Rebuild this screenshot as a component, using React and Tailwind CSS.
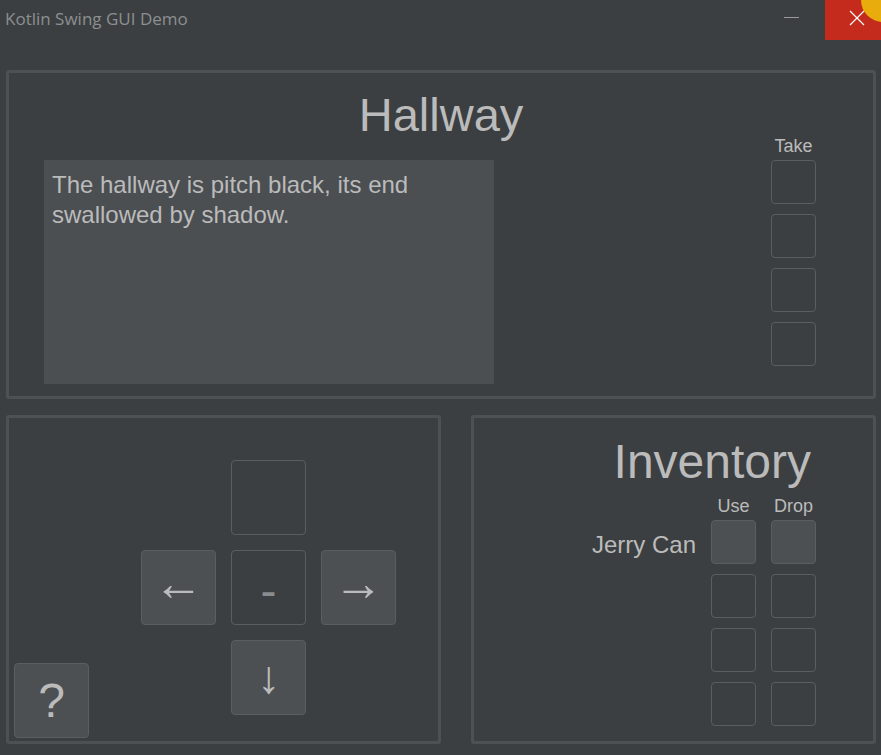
import React from "react";

const Box = ({ enabled = false }) => (
  <div
    className={
      "w-[45px] h-[44px] rounded-[4px] border border-[#5b5e60] " +
      (enabled ? "bg-[#4c5052]" : "")
    }
  />
);

const PadBtn = ({ children, enabled = false, dim = false, extra = "" }) => (
  <div
    className={
      "w-[75px] h-[75px] rounded-[4px] border border-[#5b5e60] flex items-center justify-center " +
      (enabled ? "bg-[#4c5052] " : "") +
      (dim ? "text-[#8a8c8e] " : "text-[#bbbbbb] ") +
      extra
    }
  >
    {children}
  </div>
);

export default function App() {
  return (
    <div className="w-[881px] h-[755px] bg-[#3c3f41] overflow-hidden flex flex-col font-['Liberation_Sans',Arial,sans-serif] text-[#bbbbbb]">
      {/* Title bar */}
      <div className="h-10 flex items-start shrink-0">
        <span className="pl-[5px] pt-[7px] text-[17px] leading-[24px] text-[#8c8f91] font-['Open_Sans',sans-serif]">
          Kotlin Swing GUI Demo
        </span>
        <div className="ml-auto mt-[17px] mr-[26px] w-[15px] h-px bg-[#9a9a9a]" />
        <div className="relative w-[56px] h-10 bg-[#c42b1c] overflow-hidden">
          <svg
            className="absolute left-[24px] top-[10px]"
            width="16"
            height="16"
            viewBox="0 0 16 16"
          >
            <path d="M1 1 L15 15 M15 1 L1 15" stroke="#ffffff" strokeWidth="1.2" fill="none" />
          </svg>
          <div className="absolute left-[36px] top-[-22px] w-[44px] h-[44px] rounded-full bg-[#e8ad0c]" />
        </div>
      </div>

      {/* Content */}
      <div className="flex flex-col pl-[6px] pt-[30px]">
        {/* Top panel */}
        <div className="w-[870px] h-[329px] border-[3px] border-[#4e5153] rounded-[3px] flex flex-col">
          <div className="mt-[19px] h-[45px] text-center text-[47px] leading-[45px]">Hallway</div>
          <div className="flex items-start">
            <div className="ml-[35px] mt-[23px] w-[450px] h-[224px] bg-[#4b4f52] px-[8px] pt-[10px] text-[24px] leading-[30px]">
              The hallway is pitch black, its end swallowed by shadow.
            </div>
            <div className="ml-auto mr-[57px] w-[45px] flex flex-col items-center">
              <div className="h-[18px] text-[18px] leading-[18px] mb-[5px]">Take</div>
              <div className="flex flex-col gap-[10px]">
                <Box />
                <Box />
                <Box />
                <Box />
              </div>
            </div>
          </div>
        </div>

        {/* Bottom row */}
        <div className="flex mt-[16px] gap-[30px]">
          {/* Navigation panel */}
          <div className="w-[435px] h-[329px] border-[3px] border-[#4e5153] rounded-[3px] flex items-start">
            <div className="self-end mb-[3px] ml-[5px]">
              <PadBtn enabled extra="text-[48px] leading-none">
                ?
              </PadBtn>
            </div>
            <div className="ml-[52px] mt-[42px] grid grid-cols-[75px_75px_75px] gap-[15px]">
              <div />
              <PadBtn />
              <div />
              <PadBtn enabled extra="text-[50px] leading-none pb-[9px]">
                ←
              </PadBtn>
              <PadBtn dim extra="text-[48px] leading-none pt-[6px]">
                -
              </PadBtn>
              <PadBtn enabled extra="text-[50px] leading-none pb-[9px]">
                →
              </PadBtn>
              <div />
              <PadBtn enabled extra="text-[46px] leading-none pb-[2px]">
                ↓
              </PadBtn>
              <div />
            </div>
          </div>

          {/* Inventory panel */}
          <div className="w-[405px] h-[329px] border-[3px] border-[#4e5153] rounded-[3px] flex flex-col items-end pr-[57px]">
            <div className="mt-[21px] mr-[5px] h-[45px] text-[48px] leading-[45px]">Inventory</div>
            <div className="mt-[13px] flex gap-[15px]">
              <div className="w-[45px] text-center text-[18px] leading-[18px]">Use</div>
              <div className="w-[45px] text-center text-[18px] leading-[18px]">Drop</div>
            </div>
            <div className="mt-[5px] flex flex-col items-end gap-[10px]">
              <div className="flex items-start gap-[15px]">
                <div className="mt-[13px] text-[24px] leading-[24px]">Jerry Can</div>
                <Box enabled />
                <Box enabled />
              </div>
              <div className="flex gap-[15px]">
                <Box />
                <Box />
              </div>
              <div className="flex gap-[15px]">
                <Box />
                <Box />
              </div>
              <div className="flex gap-[15px]">
                <Box />
                <Box />
              </div>
            </div>
          </div>
        </div>
      </div>
    </div>
  );
}
